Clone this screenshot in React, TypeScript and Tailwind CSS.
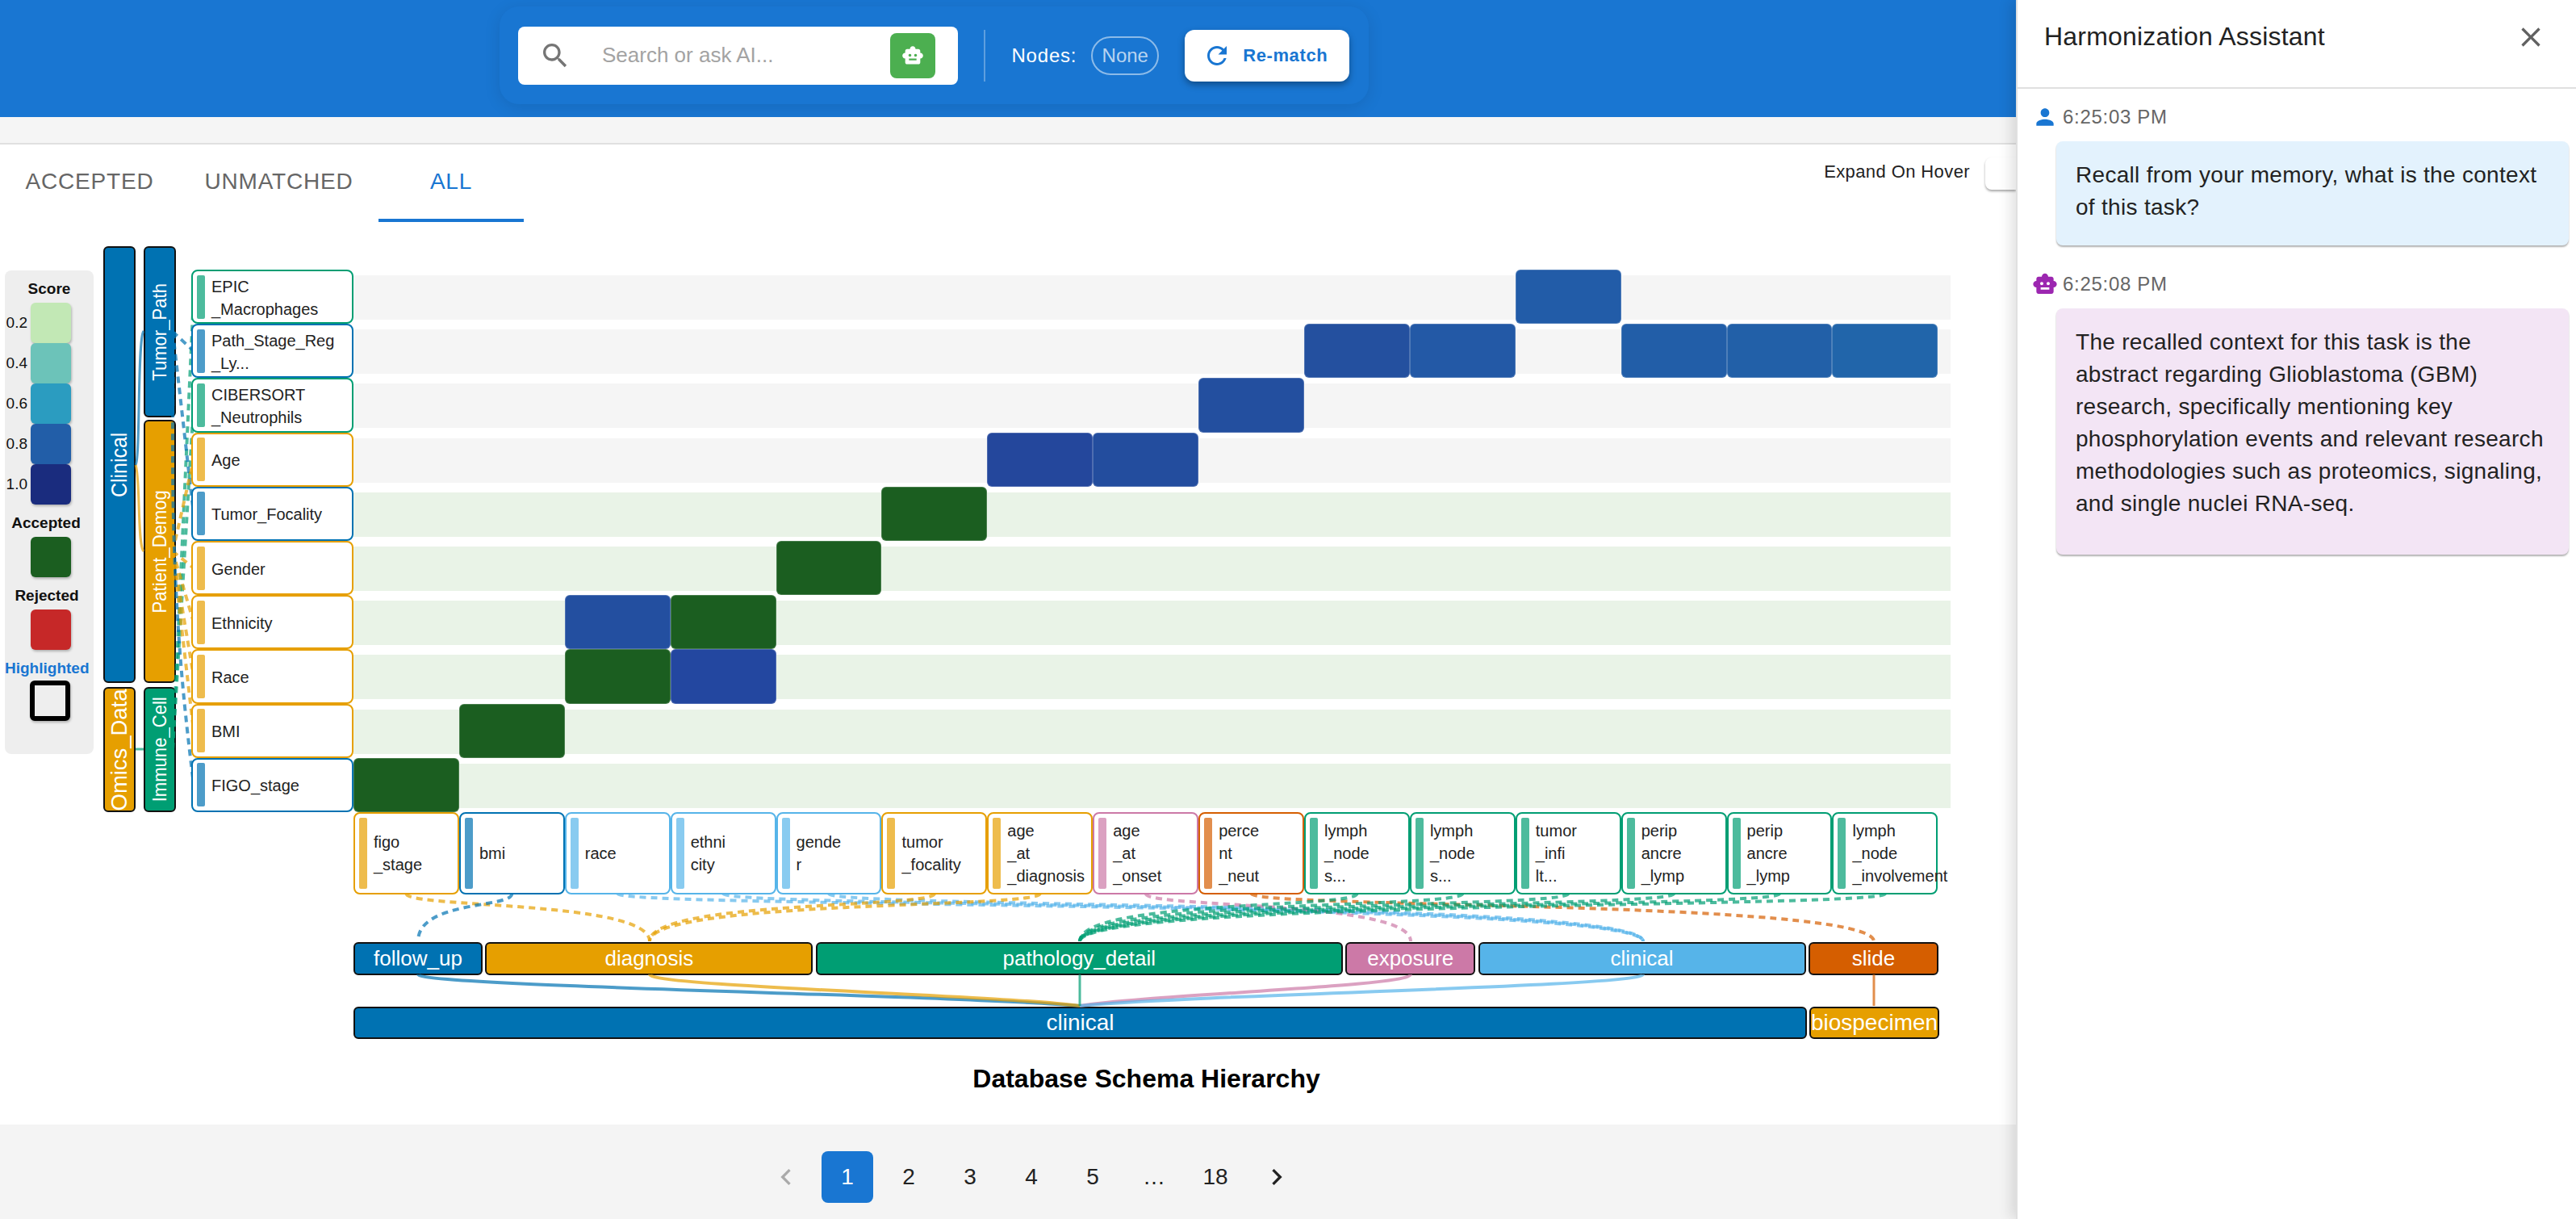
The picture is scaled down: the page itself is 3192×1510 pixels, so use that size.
import { Fragment } from "react";

const PATHS = {
  search: "M15.5 14h-.79l-.28-.27C15.41 12.59 16 11.11 16 9.5 16 5.91 13.09 3 9.5 3S3 5.91 3 9.5 5.91 16 9.5 16c1.61 0 3.09-.59 4.23-1.57l.27.28v.79l5 4.99L20.49 19zm-6 0C7.01 14 5 11.99 5 9.5S7.01 5 9.5 5 14 7.01 14 9.5 11.99 14 9.5 14",
  robot: "M20 9V7c0-1.1-.9-2-2-2h-3c0-1.66-1.34-3-3-3S9 3.34 9 5H6c-1.1 0-2 .9-2 2v2c-1.66 0-3 1.34-3 3s1.34 3 3 3v4c0 1.1.9 2 2 2h12c1.1 0 2-.9 2-2v-4c1.66 0 3-1.34 3-3s-1.34-3-3-3M7.5 11.5c0-.83.67-1.5 1.5-1.5s1.5.67 1.5 1.5S9.83 13 9 13s-1.5-.67-1.5-1.5M16 17H8v-2h8zm-1-4c-.83 0-1.5-.67-1.5-1.5S14.17 10 15 10s1.5.67 1.5 1.5S15.83 13 15 13",
  refresh: "M17.65 6.35C16.2 4.9 14.21 4 12 4c-4.42 0-7.99 3.58-7.99 8s3.57 8 7.99 8c3.73 0 6.84-2.55 7.73-6h-2.08c-.82 2.33-3.04 4-5.65 4-3.31 0-6-2.69-6-6s2.69-6 6-6c1.66 0 3.14.69 4.22 1.78L13 11h7V4z",
  close: "M19 6.41 17.59 5 12 10.59 6.41 5 5 6.41 10.59 12 5 17.59 6.41 19 12 13.41 17.59 19 19 17.59 13.41 12z",
  person: "M12 12c2.21 0 4-1.79 4-4s-1.79-4-4-4-4 1.79-4 4 1.79 4 4 4m0 2c-2.67 0-8 1.34-8 4v2h16v-2c0-2.66-5.33-4-8-4",
  left: "M15.41 7.41 14 6l-6 6 6 6 1.41-1.41L10.83 12z",
  right: "M10 6 8.59 7.41 13.17 12l-4.58 4.59L10 18l6-6z",
};

function Icon({ d, className }: { d: string; className: string }) {
  return (
    <svg viewBox="0 0 24 24" className={className} fill="currentColor">
      <path d={d} />
    </svg>
  );
}

const GREEN = "bg-[#1b5e20]";

const yLabels = [
  { lines: ["EPIC", "_Macrophages"], border: "border-[#009e73]", bar: "bg-[#4dbb9d]", band: "bg-[#f5f5f5]", cells: { 11: "bg-[#225ca8]" } },
  { lines: ["Path_Stage_Reg", "_Ly..."], border: "border-[#0072b2]", bar: "bg-[#4d9cc9]", band: "bg-[#f5f5f5]", cells: { 9: "bg-[#24509f]", 10: "bg-[#2359a6]", 12: "bg-[#225ea8]", 13: "bg-[#2260a8]", 14: "bg-[#2165aa]" } },
  { lines: ["CIBERSORT", "_Neutrophils"], border: "border-[#009e73]", bar: "bg-[#4dbb9d]", band: "bg-[#f5f5f5]", cells: { 8: "bg-[#234f9f]" } },
  { lines: ["Age"], border: "border-[#e69f00]", bar: "bg-[#eebc4d]", band: "bg-[#f5f5f5]", cells: { 6: "bg-[#24479c]", 7: "bg-[#234d9e]" } },
  { lines: ["Tumor_Focality"], border: "border-[#0072b2]", bar: "bg-[#4d9cc9]", band: "bg-[#e9f3e7]", cells: { 5: GREEN } },
  { lines: ["Gender"], border: "border-[#e69f00]", bar: "bg-[#eebc4d]", band: "bg-[#e9f3e7]", cells: { 4: GREEN } },
  { lines: ["Ethnicity"], border: "border-[#e69f00]", bar: "bg-[#eebc4d]", band: "bg-[#e9f3e7]", cells: { 2: "bg-[#234fa0]", 3: GREEN } },
  { lines: ["Race"], border: "border-[#e69f00]", bar: "bg-[#eebc4d]", band: "bg-[#e9f3e7]", cells: { 2: GREEN, 3: "bg-[#2347a0]" } },
  { lines: ["BMI"], border: "border-[#e69f00]", bar: "bg-[#eebc4d]", band: "bg-[#e9f3e7]", cells: { 1: GREEN } },
  { lines: ["FIGO_stage"], border: "border-[#0072b2]", bar: "bg-[#4d9cc9]", band: "bg-[#e9f3e7]", cells: { 0: GREEN } },
] as { lines: string[]; border: string; bar: string; band: string; cells: Record<number, string> }[];

const xLabels = [
  { lines: ["figo", "_stage"], border: "border-[#e69f00]", bar: "bg-[#eebc4d]" },
  { lines: ["bmi"], border: "border-[#0072b2]", bar: "bg-[#4d9cc9]" },
  { lines: ["race"], border: "border-[#56b4e9]", bar: "bg-[#89cbf0]" },
  { lines: ["ethni", "city"], border: "border-[#56b4e9]", bar: "bg-[#89cbf0]" },
  { lines: ["gende", "r"], border: "border-[#56b4e9]", bar: "bg-[#89cbf0]" },
  { lines: ["tumor", "_focality"], border: "border-[#e69f00]", bar: "bg-[#eebc4d]" },
  { lines: ["age", "_at", "_diagnosis"], border: "border-[#e69f00]", bar: "bg-[#eebc4d]" },
  { lines: ["age", "_at", "_onset"], border: "border-[#cc79a7]", bar: "bg-[#dba1c1]" },
  { lines: ["perce", "nt", "_neut"], border: "border-[#d55e00]", bar: "bg-[#e28e4d]" },
  { lines: ["lymph", "_node", "s..."], border: "border-[#009e73]", bar: "bg-[#4dbb9d]" },
  { lines: ["lymph", "_node", "s..."], border: "border-[#009e73]", bar: "bg-[#4dbb9d]" },
  { lines: ["tumor", "_infi", "lt..."], border: "border-[#009e73]", bar: "bg-[#4dbb9d]" },
  { lines: ["perip", "ancre", "_lymp"], border: "border-[#009e73]", bar: "bg-[#4dbb9d]" },
  { lines: ["perip", "ancre", "_lymp"], border: "border-[#009e73]", bar: "bg-[#4dbb9d]" },
  { lines: ["lymph", "_node", "_involvement"], border: "border-[#009e73]", bar: "bg-[#4dbb9d]" },
];

const parents = [
  { name: "follow_up", width: "w-[160px]", bg: "bg-[#0072b2]" },
  { name: "diagnosis", width: "w-[406px]", bg: "bg-[#e69f00]" },
  { name: "pathology_detail", width: "w-[653px]", bg: "bg-[#009e73]" },
  { name: "exposure", width: "w-[161px]", bg: "bg-[#cc79a7]" },
  { name: "clinical", width: "w-[406px]", bg: "bg-[#56b4e9]" },
  { name: "slide", width: "w-[161px]", bg: "bg-[#d55e00]" },
];

const scale = [
  { label: "0.2", bg: "bg-[#c2e8b5]" },
  { label: "0.4", bg: "bg-[#6cc3b9]" },
  { label: "0.6", bg: "bg-[#2b9cc0]" },
  { label: "0.8", bg: "bg-[#225ea8]" },
  { label: "1.0", bg: "bg-[#1a2c7e]" },
];

const colX = (i: number) => 438 + 130.9 * (i + 0.5);
const rowY = (i: number) => 334 + 67.2 * (i + 0.5);

// x label -> first level parent
const xLinks = [
  [0, 805, "#e69f00"], [1, 518, "#0072b2"], [2, 2036, "#56b4e9"], [3, 2036, "#56b4e9"], [4, 2036, "#56b4e9"],
  [5, 805, "#e69f00"], [6, 805, "#e69f00"], [7, 1748, "#cc79a7"], [8, 2322, "#d55e00"], [9, 1338, "#009e73"],
  [10, 1338, "#009e73"], [11, 1338, "#009e73"], [12, 1338, "#009e73"], [13, 1338, "#009e73"], [14, 1338, "#009e73"],
] as [number, number, string][];

// y label -> second column parent
const yLinks = [
  [0, 928, "#009e73"], [2, 928, "#009e73"], [1, 411, "#0072b2"], [4, 411, "#0072b2"], [3, 683, "#e69f00"],
  [5, 683, "#e69f00"], [6, 683, "#e69f00"], [7, 683, "#e69f00"], [8, 683, "#e69f00"],
] as [number, number, string][];

function Links() {
  return (
    <svg className="absolute left-0 top-0 pointer-events-none" width={2498} height={1118} viewBox="0 275 2498 1118" fill="none" strokeOpacity={0.7}>
      {xLinks.map(([i, x1, color]) => {
        const x0 = colX(i);
        return <path key={i} d={`M${x0} 1107 C${x0} 1125 ${x1} 1115 ${x1} 1166`} stroke={color} strokeWidth={4} strokeDasharray="8 6" />;
      })}
      {yLinks.map(([i, y0, color]) => {
        const y1 = rowY(i);
        return <path key={i} d={`M214 ${y0} C222 ${y0 + (y1 - y0) * 0.3} 232 ${y0 + (y1 - y0) * 0.7} 240 ${y1}`} stroke={color} strokeWidth={4} strokeDasharray="8 6" />;
      })}
      <path d="M216 411 C208 700 225 850 240 972" stroke="#0072b2" strokeWidth={4} strokeDasharray="8 6" />
      <path d="M168 576 C174 570 170 420 178 410" stroke="#0072b2" strokeWidth={3} />
      <path d="M168 576 C174 590 170 675 178 683" stroke="#e69f00" strokeWidth={3} />
      <path d="M168 928 H178" stroke="#009e73" strokeWidth={3} />
      {[[518, "#0072b2"], [805, "#e69f00"], [1748, "#cc79a7"], [2036, "#56b4e9"]].map(([x0, color]) => {
        const x = x0 as number;
        return <path key={x} d={`M${x} 1207 C${x} 1222 ${1338 - (1338 - x) * 0.2} 1232 1338 1246`} stroke={color as string} strokeWidth={4} />;
      })}
      <path d="M1338 1207 V1246" stroke="#009e73" strokeWidth={3} />
      <path d="M2322 1207 V1246" stroke="#d55e00" strokeWidth={3} />
    </svg>
  );
}

function Legend() {
  const swatch = "w-[50px] h-[50px] rounded-[6px] shadow-[1px_2px_3px_rgba(0,0,0,0.25)]";
  return (
    <div className="ml-[6px] mt-[60px] w-[110px] h-[599px] shrink-0 rounded-[8px] bg-[#eeeeee] pt-[13px] text-[19px] leading-[20px] text-[#111]">
      <div className="text-center font-bold">Score</div>
      <div className="mt-[7px] flex flex-col">
        {scale.map((s) => (
          <div key={s.label} className="flex items-center">
            <span className="w-[28px] text-right">{s.label}</span>
            <div className={`ml-[4px] ${swatch} ${s.bg}`} />
          </div>
        ))}
      </div>
      <div className="mt-[13px] pr-[8px] text-center font-bold">Accepted</div>
      <div className={`mt-[7px] ml-[32px] ${swatch} bg-[#1b5e20]`} />
      <div className="mt-[13px] pr-[6px] text-center font-bold">Rejected</div>
      <div className={`mt-[7px] ml-[32px] ${swatch} bg-[#c62828]`} />
      <div className="mt-[13px] pr-[8px] text-center font-bold text-[#1976d2]">Highlighted</div>
      <div className={`mt-[5px] ml-[31px] ${swatch} border-[6px] border-black bg-[#eeeeee]`} />
    </div>
  );
}

function Columns() {
  const bar = "flex items-center justify-center rounded-[6px] border-2 border-[#111] text-white [writing-mode:vertical-rl] rotate-180";
  return (
    <div className="ml-[12px] mt-[30px] flex shrink-0 gap-[10px]">
      <div className="flex w-[40px] flex-col gap-[5px]">
        <div className={`${bar} h-[541px] bg-[#0072b2] text-[28px]`}><span className="inline-block scale-y-[0.89]">Clinical</span></div>
        <div className={`${bar} h-[155px] bg-[#e69f00] text-[28px]`}><span className="inline-block scale-y-[0.98]">Omics_Data</span></div>
      </div>
      <div className="flex w-[40px] flex-col gap-[5px]">
        <div className="flex flex-col gap-[3px]">
          <div className={`${bar} h-[212px] bg-[#0072b2] text-[24px]`}><span className="inline-block scale-y-[0.92]">Tumor_Path</span></div>
          <div className={`${bar} h-[326px] bg-[#e69f00] text-[24px]`}><span className="inline-block scale-y-[0.92]">Patient_Demog</span></div>
        </div>
        <div className={`${bar} h-[155px] bg-[#009e73] text-[24px]`}><span className="inline-block scale-y-[0.92]">Immune_Cell</span></div>
      </div>
    </div>
  );
}

function Chart() {
  return (
    <div className="relative flex">
      <Legend />
      <Columns />
      <Links />
      <div className="relative z-10 ml-[19px] mt-[59px] w-[201px] shrink-0">
        {yLabels.map((r) => (
          <div key={r.lines[0]} className={`flex h-[67.2px] items-center rounded-[8px] border-2 bg-white pl-[5px] ${r.border}`}>
            <div className={`h-[54px] w-[10px] shrink-0 rounded-[2px] ${r.bar}`} />
            <div className="ml-[8px] pt-[2px] text-[20px] leading-[28px] text-[#222]">
              {r.lines.map((l) => <div key={l}>{l}</div>)}
            </div>
          </div>
        ))}
      </div>
      <div className="mt-[59px] w-[1979px] shrink-0">
        {yLabels.map((r) => (
          <div key={r.lines[0]} className="relative grid h-[67.2px] grid-cols-[repeat(15,130.9px)]">
            <div className={`absolute inset-x-0 top-[7px] h-[55px] ${r.band}`} />
            {Array.from({ length: 15 }).map((_, i) => (
              <div key={i} className={r.cells[i] ? `relative rounded-[6px] border border-white/20 ${r.cells[i]}` : ""} />
            ))}
          </div>
        ))}
        <div className="relative z-10 grid h-[102px] grid-cols-[repeat(15,130.9px)]">
          {xLabels.map((c, i) => (
            <div key={i} className={`flex items-center rounded-[8px] border-2 bg-white pl-[5px] ${c.border}`}>
              <div className={`h-[88px] w-[10px] shrink-0 rounded-[2px] ${c.bar}`} />
              <div className="ml-[8px] whitespace-nowrap text-[20px] leading-[28px] text-[#222]">
                {c.lines.map((l, j) => <div key={j}>{l}</div>)}
              </div>
            </div>
          ))}
        </div>
        <div className="mt-[59px] flex h-[41px] gap-[3.4px]">
          {parents.map((p) => (
            <div key={p.name} className={`flex items-center justify-center rounded-[6px] border-2 border-[#111] text-[26px] text-white ${p.width} ${p.bg}`}>
              {p.name}
            </div>
          ))}
        </div>
        <div className="mt-[39px] flex h-[40px] gap-[3px]">
          <div className="flex w-[1801px] items-center justify-center rounded-[6px] border-2 border-[#111] bg-[#0072b2] text-[28px] text-white">clinical</div>
          <div className="flex w-[161px] items-center justify-center rounded-[6px] border-2 border-[#111] bg-[#e69f00] text-[28px] whitespace-nowrap text-white">biospecimen</div>
        </div>
        <div className="mt-[31px] w-[1965px] text-center text-[32px] leading-[36px] font-bold text-black">Database Schema Hierarchy</div>
      </div>
    </div>
  );
}

function Header() {
  return (
    <div className="h-[145px] shrink-0 bg-[#1976d2] pt-[8px] pl-[619px]">
      <div className="flex h-[121px] w-[1077px] items-center rounded-[24px] bg-[#1976d2] pr-[24px] pl-[23px] shadow-[0_4px_20px_rgba(0,0,0,0.1)]">
        <div className="flex h-[72px] w-[546px] items-center rounded-[8px] bg-white pr-[28px] pl-[26px]">
          <Icon d={PATHS.search} className="h-[40px] w-[40px] text-[#757575]" />
          <span className="ml-[38px] text-[26px] text-[#a3a3a3]">Search or ask AI...</span>
          <div className="ml-auto flex h-[56px] w-[56px] items-center justify-center rounded-[8px] bg-[#4caf50]">
            <Icon d={PATHS.robot} className="h-[28px] w-[28px] text-white" />
          </div>
        </div>
        <div className="ml-[32px] h-[64px] w-[2px] bg-white/30" />
        <span className="ml-[32px] text-[24px] tracking-[0.8px] text-white">Nodes:</span>
        <div className="ml-[18px] flex h-[48px] w-[84px] items-center justify-center rounded-full border-2 border-white/50 text-[24px] text-white/70">None</div>
        <div className="ml-[32px] flex h-[64px] w-[204px] items-center rounded-[12px] bg-white pl-[22px] shadow-[0_4px_8px_rgba(0,0,0,0.35)]">
          <Icon d={PATHS.refresh} className="h-[36px] w-[36px] text-[#1976d2]" />
          <span className="ml-[14px] text-[22px] font-bold tracking-[0.6px] text-[#1976d2]">Re-match</span>
        </div>
      </div>
    </div>
  );
}

function Tabs() {
  return (
    <div className="flex h-[96px] shrink-0">
      <div className="flex h-[96px] w-[222px] items-center justify-center pb-[4px] text-[28px] tracking-[0.8px] text-[#666]">ACCEPTED</div>
      <div className="flex h-[96px] w-[247px] items-center justify-center pb-[4px] text-[28px] tracking-[0.8px] text-[#666]">UNMATCHED</div>
      <div className="flex h-[96px] w-[180px] items-center justify-center border-b-4 border-[#1976d2] text-[28px] tracking-[0.8px] text-[#1976d2]">ALL</div>
      <div className="ml-auto flex items-start pt-[16px]">
        <span className="text-[22px] leading-[36px] tracking-[0.4px] text-[#222]">Expand On Hover</span>
        <div className="ml-[19px] h-[40px] w-[38px] rounded-l-[8px] bg-white shadow-[0_2px_3px_rgba(0,0,0,0.35)]" />
      </div>
    </div>
  );
}

function Pagination() {
  const pages = ["2", "3", "4", "5", "…", "18"];
  const btn = "mx-[6px] flex h-[64px] w-[64px] items-center justify-center rounded-[8px]";
  return (
    <div className="flex h-[117px] shrink-0 items-center justify-center bg-[#f4f4f4] pt-[12px] pl-[58px] text-[28px] text-[#222]">
      <div className={`${btn} text-[#aaa]`}><Icon d={PATHS.left} className="h-[40px] w-[40px]" /></div>
      <div className={`${btn} bg-[#1976d2] text-white`}>1</div>
      {pages.map((p) => <div key={p} className={btn}>{p}</div>)}
      <div className={btn}><Icon d={PATHS.right} className="h-[40px] w-[40px]" /></div>
    </div>
  );
}

function Message({ icon, iconClass, time, bg, pad, children }: {
  icon: string; iconClass: string; time: string; bg: string; pad: string; children: React.ReactNode;
}) {
  return (
    <Fragment>
      <div className="flex h-[32px] items-center pl-[18px]">
        <Icon d={icon} className={`h-[32px] w-[32px] shrink-0 ${iconClass}`} />
        <span className="ml-[6px] text-[24px] tracking-[0.7px] text-[#666]">{time}</span>
      </div>
      <div className={`mt-[14px] ml-[48px] w-[635px] rounded-[8px] pt-[22px] pl-[24px] pr-[24px] text-[28px] leading-[40px] tracking-[0.3px] text-[#222] shadow-[0_2px_2px_rgba(0,0,0,0.3)] ${bg} ${pad}`}>
        {children}
      </div>
    </Fragment>
  );
}

function Drawer() {
  return (
    <div className="relative z-20 h-[1510px] w-[694px] shrink-0 border-l-2 border-[#e0e0e0] bg-white shadow-[-6px_0_16px_rgba(0,0,0,0.12)]">
      <div className="flex h-[110px] items-start border-b-2 border-[#e0e0e0] pt-[26px] pr-[36px] pl-[33px]">
        <span className="text-[32px] leading-[38px] tracking-[0.2px] text-[#222]">Harmonization Assistant</span>
        <Icon d={PATHS.close} className="ml-auto h-[40px] w-[40px] text-[#616161]" />
      </div>
      <div className="pt-[19px]">
        <Message icon={PATHS.person} iconClass="text-[#1976d2]" time="6:25:03 PM" bg="bg-[#e3f2fd]" pad="pb-[27px]">
          Recall from your memory, what is the context of this task?
        </Message>
        <div className="h-[32px]" />
        <Message icon={PATHS.robot} iconClass="text-[#9c27b0]" time="6:25:08 PM" bg="bg-[#f3e5f5]" pad="pb-[43px]">
          The recalled context for this task is the abstract regarding Glioblastoma (GBM) research, specifically mentioning key phosphorylation events and relevant research methodologies such as proteomics, signaling, and single nuclei RNA-seq.
        </Message>
      </div>
    </div>
  );
}

export default function App() {
  return (
    <div className="flex h-[1510px] w-[3192px] overflow-hidden bg-white font-['Liberation_Sans',Arial,sans-serif]">
      <div className="flex w-[2498px] shrink-0 flex-col overflow-hidden">
        <Header />
        <div className="h-[34px] shrink-0 border-b-2 border-[#e0e0e0] bg-[#f5f5f5]" />
        <Tabs />
        <div className="min-h-0 flex-1">
          <Chart />
        </div>
        <Pagination />
      </div>
      <Drawer />
    </div>
  );
}
